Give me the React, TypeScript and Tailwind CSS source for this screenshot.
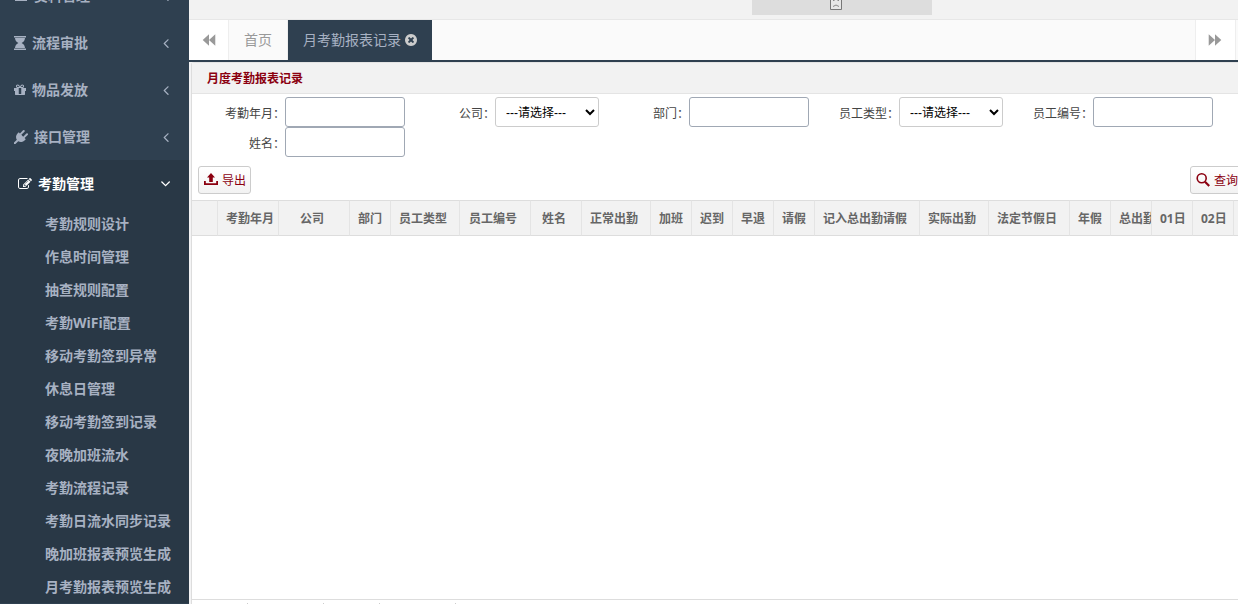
import React from "react";

const glyphs = {
  angleLeft:
    "M1203 544q0 13-10 23l-393 393 393 393q10 10 10 23t-10 23l-50 50q-10 10-23 10t-23-10l-466-466q-10-10-10-23t10-23l466-466q10-10 23-10t23 10l50 50q10 10 10 23z",
  timesCircle:
    "M1277 1122q0-26-19-45l-181-181 181-181q19-19 19-45 0-27-19-46l-90-90q-19-19-46-19-26 0-45 19l-181 181-181-181q-19-19-45-19-27 0-46 19l-90 90q-19 19-19 46 0 26 19 45l181 181-181 181q-19 19-19 45 0 27 19 46l90 90q19 19 46 19 26 0 45-19l181-181 181 181q19 19 45 19 27 0 46-19l90-90q19-19 19-46zm387-226q0 209-103 385.5t-279.5 279.5-385.5 103-385.5-103-279.5-279.5-103-385.5 103-385.5 279.5-279.5 385.5-103 385.5 103 279.5 279.5 103 385.5z",
  edit: "M888 1184l116-116-152-152-116 116v56h96v96h56zm440-720q-16-16-33 1l-350 350q-17 17-1 33t33-1l350-350q17-17 1-33zm80 594v190q0 119-84.5 203.5t-203.5 84.5h-832q-119 0-203.5-84.5t-84.5-203.5v-832q0-119 84.5-203.5t203.5-84.5h832q63 0 117 25 15 7 18 23 3 17-9 29l-49 49q-14 14-32 8-23-6-45-6h-832q-66 0-113 47t-47 113v832q0 66 47 113t113 47h832q66 0 113-47t47-113v-126q0-13 9-22l64-64q15-15 35-7t20 29zm-96-738l288 288-672 672h-288v-288zm444 132l-92 92-288-288 92-92q28-28 68-28t68 28l152 152q28 28 28 68t-28 68z",
  gift: "M1056 1356v-716h-320v716q0 25 18 38.5t46 13.5h192q28 0 46-13.5t18-38.5zm-456-844h195l-126-161q-26-31-69-31-40 0-68 28t-28 68 28 68 68 28zm688-96q0-40-28-68t-68-28q-43 0-69 31l-125 161h194q40 0 68-28t28-68zm376 256v320q0 14-9 23t-23 9h-96v416q0 40-28 68t-68 28h-1088q-40 0-68-28t-28-68v-416h-96q-14 0-23-9t-9-23v-320q0-14 9-23t23-9h440q-93 0-158.5-65.5t-65.5-158.5 65.5-158.5 158.5-65.5q107 0 168 77l128 165 128-165q61-77 168-77 93 0 158.5 65.5t65.5 158.5-65.5 158.5-158.5 65.5h440q14 0 23 9t9 23z",
  plug: "M1755 453q37 38 37 90.5t-37 90.5l-401 400 150 150-160 160q-163 163-389.5 186.5t-411.5-100.5l-362 362h-181v-181l362-362q-124-185-100.5-411.5t186.5-389.5l160-160 150 150 400-401q38-37 91-37t90 37 37 90.5-37 90.5l-400 401 234 234 401-400q38-37 91-37t90 37z",
  hourglass:
    "M128 0h1536v192h-1536zM128 1600h1536v192h-1536zM256 256h1280q-20 430-430 640 410 210 430 640h-1280q20-430 430-640-410-210-430-640z",
  folder: "M128 256h1536v1280h-1536z",
  backward: "M896 256v1280l-704-640zM1600 256v1280l-704-640z",
  forward: "M192 256v1280l704-640zM896 256v1280l704-640z",
};

type GlyphName = keyof typeof glyphs;

function Glyph({ name, box = "0 0 1792 1792", className }: { name: GlyphName; box?: string; className: string }) {
  return (
    <svg viewBox={box} className={`shrink-0 ${className}`} fill="currentColor" aria-hidden="true">
      <path d={glyphs[name]} />
    </svg>
  );
}

const NARROW = "128 0 1536 1792";

const menu: { label: string; icon: GlyphName; narrow?: boolean }[] = [
  { label: "资料管理", icon: "folder" },
  { label: "流程审批", icon: "hourglass", narrow: true },
  { label: "物品发放", icon: "gift", narrow: true },
  { label: "接口管理", icon: "plug" },
];

const submenu = [
  "考勤规则设计",
  "作息时间管理",
  "抽查规则配置",
  "考勤WiFi配置",
  "移动考勤签到异常",
  "休息日管理",
  "移动考勤签到记录",
  "夜晚加班流水",
  "考勤流程记录",
  "考勤日流水同步记录",
  "晚加班报表预览生成",
  "月考勤报表预览生成",
];

function Sidebar() {
  return (
    <nav className="w-[189px] shrink-0 overflow-hidden bg-[#2f4050] text-sm font-bold text-[#a7b1c2]">
      <ul className="-mt-7">
        {menu.map((m) => (
          <li key={m.label}>
            <a href="#" className="flex h-[47px] items-center gap-1.5 pr-[15px] pl-3.5">
              <Glyph name={m.icon} box={m.narrow ? NARROW : undefined} className={m.narrow ? "h-3.5 w-3" : "size-3.5"} />
              <span className="flex-1">{m.label}</span>
              <Glyph name="angleLeft" className="size-4" />
            </a>
          </li>
        ))}
        <li className="bg-[#293846]">
          <a href="#" className="flex h-[47px] items-center gap-1.5 pr-4 pl-[18px] text-white">
            <Glyph name="edit" className="size-3.5" />
            <span className="flex-1">考勤管理</span>
            <Glyph name="angleLeft" className="size-4 -rotate-90" />
          </a>
          <ul>
            {submenu.map((s) => (
              <li key={s}>
                <a href="#" className="flex h-[33px] items-center pl-[45px] whitespace-nowrap">
                  {s}
                </a>
              </li>
            ))}
          </ul>
        </li>
      </ul>
    </nav>
  );
}

function TopBar() {
  return (
    <header className="flex h-5 shrink-0 border-b border-[#e7e7e7] bg-[#f2f2f2]">
      <div className="mr-[306px] ml-auto flex h-[15px] w-[180px] items-start justify-center bg-[#ddd] pr-3">
        <svg width="12" height="10" viewBox="0 0 12 10" aria-hidden="true">
          <path d="M.5 0v9.500h11v-9.500" fill="#e6e6e6" stroke="#777" />
          <path d="M3 .5h1.500M7.500 .5h1.500M3 6.500q3-3 6 0" fill="none" stroke="#888" />
        </svg>
      </div>
    </header>
  );
}

function TabBar() {
  return (
    <div className="flex h-[42px] shrink-0 border-b-2 border-[#2f4050] bg-[#fafafa] text-sm text-[#999]">
      <button type="button" aria-label="向左" className="flex w-10 items-center justify-center border-r border-[#eee] bg-white">
        <Glyph name="backward" className="size-4" />
      </button>
      <a href="#" className="flex items-center border-r border-[#eee] px-[15px]">
        首页
      </a>
      <div className="flex items-center gap-1 bg-[#2f4050] px-[15px] text-[#a7b1c2]">
        <a href="#">月考勤报表记录</a>
        <button type="button" aria-label="关闭" className="text-[#ccc]">
          <Glyph name="timesCircle" box="128 128 1536 1536" className="size-3" />
        </button>
      </div>
      <button
        type="button"
        aria-label="向右"
        className="mr-0.5 ml-auto flex w-[41px] items-center justify-center border-x border-[#eee] bg-white pr-0.5"
      >
        <Glyph name="forward" className="size-4" />
      </button>
    </div>
  );
}

const fields = [
  { id: "month", label: "考勤年月" },
  { id: "company", label: "公司", select: true },
  { id: "dept", label: "部门" },
  { id: "type", label: "员工类型", select: true },
  { id: "code", label: "员工编号" },
  { id: "name", label: "姓名" },
];

function Filters() {
  return (
    <form className="flex flex-wrap pt-[3px] pl-[3px]">
      {fields.map((f) => (
        <div key={f.id} className="flex items-center">
          <label htmlFor={f.id} className="w-[90px] pt-1 text-right text-[#444]">
            {f.label}：
          </label>
          {f.select ? (
            <select
              id={f.id}
              className="h-[30px] w-[104px] rounded-[3px] border border-[#ccc] bg-white px-1.5 pt-0.5 font-['Liberation_Sans','Noto_Sans_CJK_SC',sans-serif] text-black"
            >
              <option>---请选择---</option>
            </select>
          ) : (
            <input id={f.id} type="text" className="h-[30px] w-[120px] rounded-[3px] border border-[#a0a8b4] bg-white px-2" />
          )}
        </div>
      ))}
    </form>
  );
}

const buttonClass =
  "flex h-7 w-[53px] items-center gap-1 rounded-[3px] border border-[#ccc] bg-linear-to-b from-white to-[#f2f2f2] pl-[5px] whitespace-nowrap text-[#8b0010]";

function Toolbar() {
  return (
    <div className="-mr-[5px] flex justify-between pt-[9px] pb-1.5 pl-1.5">
      <button type="button" className={buttonClass}>
        <svg viewBox="0 0 14 14" className="size-3.5 shrink-0" fill="currentColor" aria-hidden="true">
          <path d="M7 0l4 4.500H8.800V9H5.200V4.500H3zM0 8h1.800v2.200h10.400V8H14v4H0z" />
        </svg>
        <span className="pt-0.5">导出</span>
      </button>
      <button type="button" className={buttonClass}>
        <svg viewBox="0 0 14 14" className="size-3.5 shrink-0" fill="none" stroke="currentColor" aria-hidden="true">
          <circle cx="5.700" cy="5.300" r="4.500" strokeWidth="1.600" />
          <path d="M9 8.700l4.200 4.300" strokeWidth="2.200" />
        </svg>
        <span className="pt-0.5">查询</span>
      </button>
    </div>
  );
}

const columns = [
  { label: "", width: 26 },
  { label: "考勤年月", width: 61 },
  { label: "公司", width: 71 },
  { label: "部门", width: 41 },
  { label: "员工类型", width: 69 },
  { label: "员工编号", width: 71 },
  { label: "姓名", width: 51 },
  { label: "正常出勤", width: 69 },
  { label: "加班", width: 41 },
  { label: "迟到", width: 41 },
  { label: "早退", width: 41 },
  { label: "请假", width: 41 },
  { label: "记入总出勤请假", width: 105 },
  { label: "实际出勤", width: 69 },
  { label: "法定节假日", width: 81 },
  { label: "年假", width: 41 },
  { label: "总出勤", width: 41 },
  { label: "01日", width: 41 },
  { label: "02日", width: 41 },
  { label: "", width: 41 },
];

const totalWidth = columns.reduce((sum, c) => sum + c.width, 0);

function DataTable() {
  return (
    <div className="flex-1 overflow-hidden">
      <table className="table-fixed border-separate border-spacing-0" style={{ width: totalWidth }}>
        <colgroup>
          {columns.map((c, i) => (
            <col key={i} style={{ width: c.width }} />
          ))}
        </colgroup>
        <thead>
          <tr className="h-9 bg-[#f2f2f2] text-[#666]">
            {columns.map((c, i) => (
              <th
                key={i}
                scope="col"
                className="overflow-hidden border-y border-r border-y-[#ddd] border-r-[#e4e4e4] p-0 font-bold whitespace-nowrap"
              >
                <div className={c.width < 62 && c.width !== 51 ? "overflow-hidden pt-0.5 pl-2 text-left" : "pt-0.5 pr-1 text-center"}>
                  {c.label}
                </div>
              </th>
            ))}
          </tr>
        </thead>
        <tbody />
      </table>
    </div>
  );
}

function Pager() {
  return (
    <footer className="flex h-[5px] shrink-0 items-end border-t border-[#ddd] pl-[55px]">
      <i className="mr-[75px] size-px bg-[#ccc]" />
      <i className="mr-[55px] size-px bg-[#ccc]" />
      <i className="mr-[75px] size-px bg-[#ccc]" />
      <i className="size-px bg-[#ccc]" />
    </footer>
  );
}

export default function App() {
  return (
    <div className="flex h-screen overflow-hidden bg-white font-['Open_Sans','Noto_Sans_CJK_SC',sans-serif] text-xs">
      <Sidebar />
      <div className="flex min-w-0 flex-1 flex-col">
        <TopBar />
        <TabBar />
        <main className="flex min-h-0 flex-1 bg-[#f3f3f4] pl-0.5">
          <section className="flex min-w-0 flex-1 flex-col overflow-hidden rounded-tl-[3px] border-l border-[#ddd] bg-white">
            <h1 className="flex h-8 shrink-0 items-center border-y border-[#e4e4e4] bg-[#f2f2f2] pt-0.5 pl-[15px] font-bold text-[#8b0010]">
              月度考勤报表记录
            </h1>
            <Filters />
            <Toolbar />
            <DataTable />
            <Pager />
          </section>
        </main>
      </div>
    </div>
  );
}
